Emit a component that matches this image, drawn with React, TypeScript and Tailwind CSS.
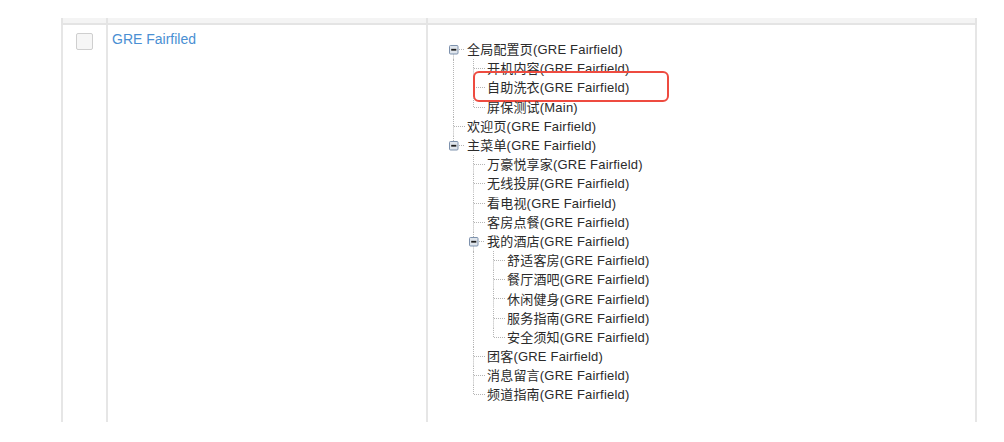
import React from 'react';

type TreeNode = {
  label: string;
  children?: TreeNode[];
  marked?: boolean;
};

const tree: TreeNode[] = [
  {
    label: '全局配置页(GRE Fairfield)',
    children: [
      { label: '开机内容(GRE Fairfield)' },
      { label: '自助洗衣(GRE Fairfield)', marked: true },
      { label: '屏保测试(Main)' },
    ],
  },
  { label: '欢迎页(GRE Fairfield)' },
  {
    label: '主菜单(GRE Fairfield)',
    children: [
      { label: '万豪悦享家(GRE Fairfield)' },
      { label: '无线投屏(GRE Fairfield)' },
      { label: '看电视(GRE Fairfield)' },
      { label: '客房点餐(GRE Fairfield)' },
      {
        label: '我的酒店(GRE Fairfield)',
        children: [
          { label: '舒适客房(GRE Fairfield)' },
          { label: '餐厅酒吧(GRE Fairfield)' },
          { label: '休闲健身(GRE Fairfield)' },
          { label: '服务指南(GRE Fairfield)' },
          { label: '安全须知(GRE Fairfield)' },
        ],
      },
      { label: '团客(GRE Fairfield)' },
      { label: '消息留言(GRE Fairfield)' },
      { label: '频道指南(GRE Fairfield)' },
    ],
  },
];

const LINE = '#b5b5b5';

// connector lines + open toggle for one tree row
function Switch({ first, hasNext, open }: { first: boolean; hasNext: boolean; open: boolean }) {
  return (
    <svg className="h-full w-[18px] shrink-0" viewBox="0 0 18 19.2" preserveAspectRatio="none">
      {!first && <line x1="4.5" y1="0" x2="4.5" y2="9.6" stroke={LINE} strokeDasharray="1 1" />}
      {hasNext && <line x1="4.5" y1="9.6" x2="4.5" y2="19.2" stroke={LINE} strokeDasharray="1 1" />}
      <line x1={open ? 10 : 5} y1="9.5" x2="16" y2="9.5" stroke={LINE} strokeDasharray="1 1" />
      {open && (
        <g>
          <rect x="0.5" y="5.5" width="8.5" height="8.5" rx="1" fill="#dfe5ec" stroke="#7c91ad" />
          <line x1="2.2" y1="9.75" x2="7.3" y2="9.75" stroke="#1f1f1f" strokeWidth="1.8" />
        </g>
      )}
    </svg>
  );
}

function Nodes({ nodes, root }: { nodes: TreeNode[]; root: boolean }) {
  return (
    <ul>
      {nodes.map((node, i) => {
        const hasNext = i < nodes.length - 1;
        const open = !!node.children;
        return (
          <li key={node.label}>
            <div className="relative flex h-[19.2px] items-center">
              <Switch first={root && i === 0} hasNext={hasNext} open={open} />
              <span className="whitespace-nowrap text-[13px] leading-none tracking-[0.2px] text-[#2b2b2b]">
                {node.label}
              </span>
              {node.marked && (
                <div className="absolute -top-[7px] left-[4px] h-[31px] w-[196px] rounded-[6px] border-2 border-[#ee4b40]" />
              )}
            </div>
            {node.children && (
              <div
                className={
                  hasNext
                    ? 'ml-[4px] border-l border-dotted border-[#b5b5b5] pl-[15px]'
                    : 'ml-[4px] border-l border-transparent pl-[15px]'
                }
              >
                <Nodes nodes={node.children} root={false} />
              </div>
            )}
          </li>
        );
      })}
    </ul>
  );
}

export default function App() {
  return (
    <div
      className="h-[442px] w-[1004px] bg-white pt-[18px]"
      style={{ fontFamily: '"Liberation Sans", "Noto Sans CJK SC", sans-serif' }}
    >
      <div className="ml-[61px] w-[916px]">
        <div className="grid h-[7px] grid-cols-[45px_320px_1fr] border-b-2 border-[#e4e4e4] bg-[#f4f4f4]">
          <div className="border-l-2 border-[#e4e4e4]" />
          <div className="border-l-2 border-[#e4e4e4]" />
          <div className="border-x-2 border-[#e4e4e4]" />
        </div>
        <div className="grid h-[397px] grid-cols-[45px_320px_1fr]">
          <div className="flex justify-center border-l-2 border-[#e6e6e6] pt-[8px]">
            <div className="h-[17px] w-[17px] rounded-[2px] border border-[#cfcfcf] bg-[#f6f6f6]" />
          </div>
          <div className="border-l-2 border-[#e6e6e6] pl-[4px] pt-[2px]">
            <a className="text-[14px] leading-5 text-[#4a8fd3]">GRE Fairfiled</a>
          </div>
          <div className="border-x-2 border-[#e6e6e6] pl-[21px] pt-[15px]">
            <Nodes nodes={tree} root />
          </div>
        </div>
      </div>
    </div>
  );
}
